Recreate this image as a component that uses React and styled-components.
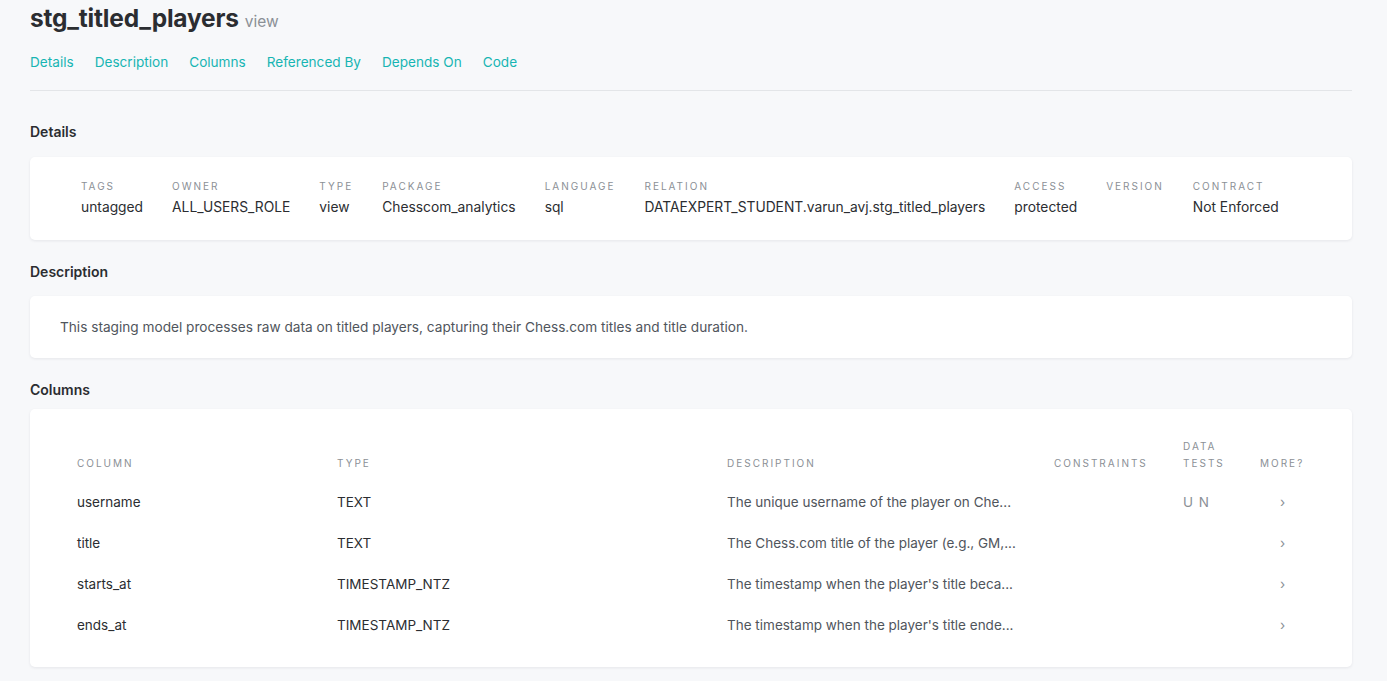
import React from 'react';
import styled, { createGlobalStyle } from 'styled-components';

const details = [
  { label: 'Tags', value: 'untagged' },
  { label: 'Owner', value: 'ALL_USERS_ROLE' },
  { label: 'Type', value: 'view' },
  { label: 'Package', value: 'Chesscom_analytics' },
  { label: 'Language', value: 'sql' },
  { label: 'Relation', value: 'DATAEXPERT_STUDENT.varun_avj.stg_titled_players' },
  { label: 'Access', value: 'protected' },
  { label: 'Version', value: '' },
  { label: 'Contract', value: 'Not Enforced' },
];

const columns = [
  { name: 'username', type: 'TEXT', desc: 'The unique username of the player on Che...', tests: 'U N' },
  { name: 'title', type: 'TEXT', desc: 'The Chess.com title of the player (e.g., GM,...', tests: '' },
  { name: 'starts_at', type: 'TIMESTAMP_NTZ', desc: "The timestamp when the player's title beca...", tests: '' },
  { name: 'ends_at', type: 'TIMESTAMP_NTZ', desc: "The timestamp when the player's title ende...", tests: '' },
];

const tabs = ['Details', 'Description', 'Columns', 'Referenced By', 'Depends On', 'Code'];

export default function App() {
  return (
    <Page>
      <GlobalStyle />
      <Header>
        <Title>stg_titled_players</Title>
        <Kind>view</Kind>
      </Header>
      <Tabs>
        {tabs.map((t) => <Tab key={t}>{t}</Tab>)}
      </Tabs>

      <Section>
        <Heading $gap={17}>Details</Heading>
        <Card $pad="23px 51px 24px">
          <DetailRow>
            {details.map((d) => (
              <DetailItem key={d.label}>
                <Label>{d.label}</Label>
                <Value>{d.value || '\u00a0'}</Value>
              </DetailItem>
            ))}
          </DetailRow>
        </Card>
      </Section>

      <Section>
        <Heading $gap={16}>Description</Heading>
        <Card $pad="23px 30px 22px">
          <DescText>
            This staging model processes raw data on titled players, capturing their Chess.com titles and title duration.
          </DescText>
        </Card>
      </Section>

      <Section>
        <Heading $gap={11}>Columns</Heading>
        <Card $pad="29px 32px 21px">
          <Table>
            <colgroup>
              <col style={{ width: 260 }} />
              <col style={{ width: 390 }} />
              <col style={{ width: 327 }} />
              <col style={{ width: 129 }} />
              <col style={{ width: 77 }} />
              <col />
            </colgroup>
            <thead>
              <tr>
                <Th>Column</Th>
                <Th>Type</Th>
                <Th>Description</Th>
                <Th>Constraints</Th>
                <Th>Data<br />Tests</Th>
                <Th>More?</Th>
              </tr>
            </thead>
            <tbody>
              {columns.map((c) => (
                <tr key={c.name}>
                  <Td>{c.name}</Td>
                  <Td>{c.type}</Td>
                  <Td $muted>{c.desc}</Td>
                  <Td />
                  <Td $tests>{c.tests}</Td>
                  <Td $chev>›</Td>
                </tr>
              ))}
            </tbody>
          </Table>
        </Card>
      </Section>
    </Page>
  );
}

const GlobalStyle = createGlobalStyle`
  html, body { margin: 0; padding: 0; background: #f7f8fa; }
  body { font-family: Inter, "Noto Sans", sans-serif; color: #2b2d31; -webkit-font-smoothing: antialiased; }
  * { box-sizing: border-box; }
`;

const Page = styled.div`
  padding: 3px 35px 40px 30px;
  min-height: 681px;
`;

const Header = styled.div`
  display: flex;
  align-items: baseline;
  gap: 6px;
`;

const Title = styled.h1`
  margin: 0;
  font-size: 24.5px;
  line-height: 30px;
  font-weight: 700;
  color: #2b2d31;
  letter-spacing: -0.2px;
`;

const Kind = styled.span`
  font-size: 15.5px;
  color: #8b9096;
`;

const Tabs = styled.nav`
  display: flex;
  gap: 21px;
  padding: 21px 0 20px;
  border-bottom: 1px solid #e3e5e8;
`;

const Tab = styled.a`
  font-size: 13.6px;
  color: #17b5b3;
  cursor: pointer;
`;

const Section = styled.section`
  margin-top: 32px;
  & + & { margin-top: 23px; }
`;

const Heading = styled.h2`
  margin: 0 0 ${(p) => p.$gap}px;
  font-size: 14px;
  font-weight: 600;
  color: #2b2d31;
`;

const Card = styled.div`
  background: #fff;
  border-radius: 5px;
  box-shadow: 0 1px 3px rgba(20, 30, 50, 0.08);
  padding: ${(p) => p.$pad};
`;

const DetailRow = styled.div`
  display: flex;
  gap: 29px;
`;

const DetailItem = styled.div`
  display: flex;
  flex-direction: column;
  gap: 7px;
`;

const Label = styled.div`
  font-size: 10px;
  line-height: 12px;
  text-transform: uppercase;
  letter-spacing: 2px;
  color: #8b9096;
`;

const Value = styled.div`
  font-size: 13.8px;
  line-height: 17px;
  color: #2b2d31;
`;

const DescText = styled.p`
  margin: 0;
  font-size: 13.65px;
  line-height: 17px;
  color: #50555c;
`;

const Table = styled.table`
  width: 100%;
  border-collapse: collapse;
  table-layout: fixed;
`;

const Th = styled.th`
  text-align: left;
  vertical-align: bottom;
  font-size: 10px;
  font-weight: 400;
  text-transform: uppercase;
  letter-spacing: 2px;
  line-height: 17px;
  color: #8b9096;
  padding: 0 15px 10px;
  white-space: nowrap;
`;

const Td = styled.td`
  font-size: 13.5px;
  line-height: 17px;
  padding: 12px 15px;
  color: ${(p) => (p.$muted ? '#50555c' : p.$tests || p.$chev ? '#8b9096' : '#2b2d31')};
  white-space: nowrap;
  overflow: hidden;
  letter-spacing: ${(p) => (p.$tests ? '1px' : 'normal')};
  padding-left: ${(p) => (p.$chev ? '35px' : '15px')};
`;
